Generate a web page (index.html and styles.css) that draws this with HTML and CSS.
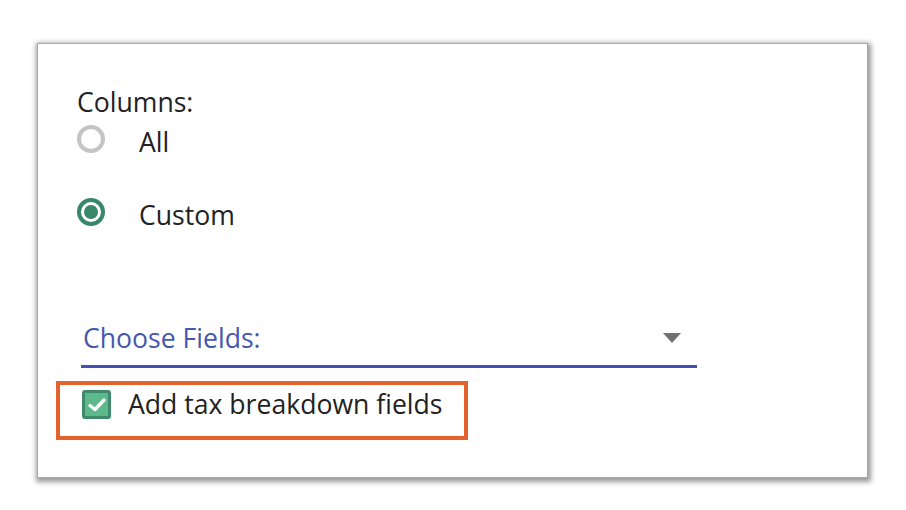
FILE: index.html
```html
<!DOCTYPE html>
<html lang="en">
<head>
    <meta charset="UTF-8">
    <meta name="viewport" content="width=device-width, initial-scale=1.0">
    <title>Export Options</title>
    <link rel="stylesheet" href="styles.css">
</head>
<body>
    <div class="panel">
        <div class="group-label">Columns:</div>

        <label class="radio-row">
            <span class="radio"></span>
            <span class="radio-text">All</span>
        </label>

        <label class="radio-row checked">
            <span class="radio"></span>
            <span class="radio-text">Custom</span>
        </label>

        <div class="select">
            <span class="select-text">Choose Fields:</span>
            <span class="caret"></span>
        </div>

        <label class="check-row">
            <span class="checkbox">
                <svg width="22" height="22" viewBox="0 0 22 22">
                    <path d="M4 11.5 L9 15.5 L18 6" fill="none" stroke="#fff" stroke-width="3.4" stroke-linecap="round" stroke-linejoin="round"/>
                </svg>
            </span>
            <span class="check-text">Add tax breakdown fields</span>
        </label>
    </div>
</body>
</html>
```

FILE: styles.css
```css
body {
    margin: 0;
    background-color: #fff;
    font-family: "Open Sans", "DejaVu Sans", sans-serif;
    font-size: 26.6px;
    color: #222;
}

.panel {
    box-sizing: border-box;
    margin: 44px 39px 33px 38px;
    height: 433px;
    padding: 40px 0 0 39px;
    background-color: #fff;
    box-shadow: 0 0 0 1px #a8a8a8, 1px 2px 5px 3px rgba(0, 0, 0, 0.4);
    display: flex;
    flex-direction: column;
    align-items: flex-start;
}

.group-label {
    line-height: 36px;
}

.radio-row {
    display: flex;
    height: 36px;
    margin-top: 4px;
    line-height: 36px;
}

.radio-row.checked {
    margin-top: 37px;
}

.radio {
    box-sizing: border-box;
    width: 28px;
    height: 28px;
    margin-top: 1px;
    border: 4px solid #c4c4c4;
    border-radius: 50%;
    position: relative;
}

.radio-row.checked .radio {
    border-color: #37876a;
}

.radio-row.checked .radio::after {
    content: "";
    position: absolute;
    left: 3px;
    top: 3px;
    width: 14px;
    height: 14px;
    border-radius: 50%;
    background-color: #37876a;
}

.radio-text {
    margin-left: 34px;
}

.select {
    display: flex;
    justify-content: space-between;
    width: 616px;
    margin: 87px 0 0 4px;
    padding: 0 0 9px 2px;
    box-sizing: border-box;
    border-bottom: 3px solid #3f51b5;
    line-height: 36px;
    color: #4657ae;
}

.caret {
    width: 0;
    height: 0;
    margin: 13px 16px 0 0;
    border-left: 9px solid transparent;
    border-right: 9px solid transparent;
    border-top: 10px solid #727272;
}

.check-row {
    display: flex;
    margin: 13px 0 0 -21px;
    padding: 1px 21px 14px 22px;
    border: 4px solid #e5622d;
    line-height: 36px;
}

.checkbox {
    box-sizing: border-box;
    width: 29px;
    height: 29px;
    margin-top: 4px;
    border: 3px solid #3e8a6b;
    border-radius: 3px;
    background-color: #5db98c;
    display: flex;
    align-items: center;
    justify-content: center;
}

.check-text {
    margin-left: 17px;
}
```
